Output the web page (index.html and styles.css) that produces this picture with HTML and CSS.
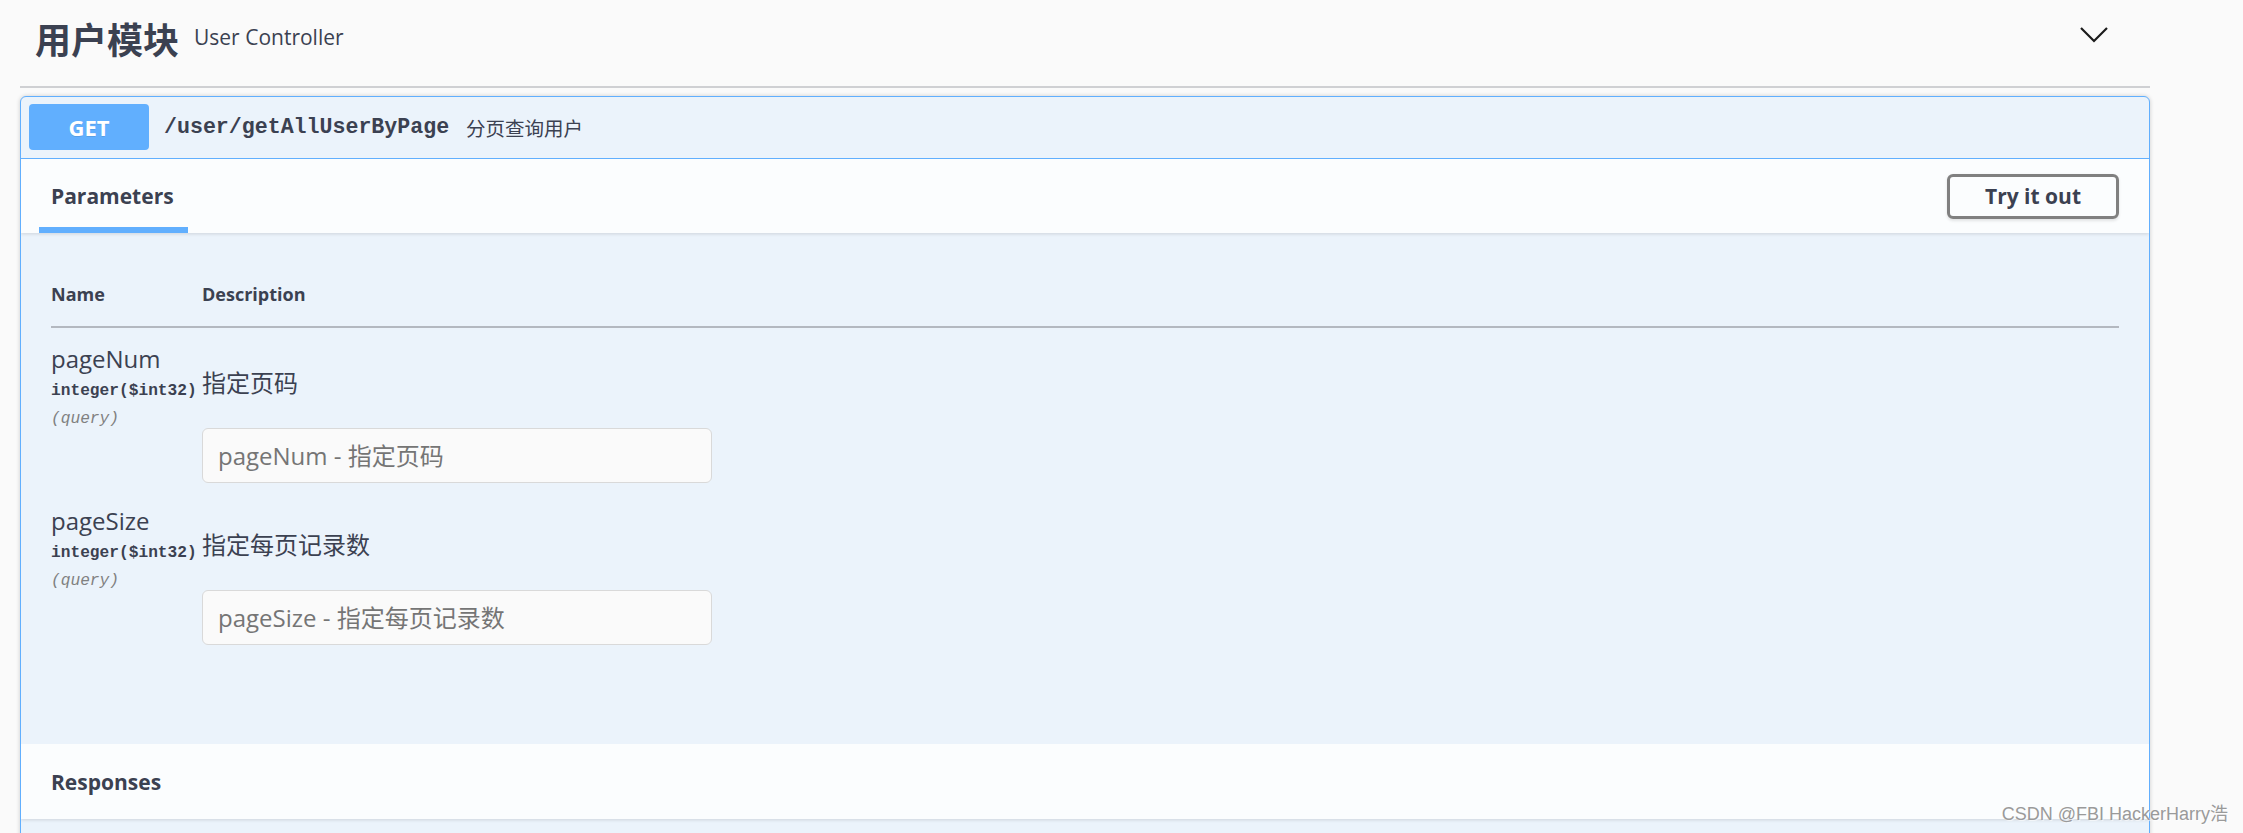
FILE: index.html
```html
<!DOCTYPE html>
<html lang="zh-CN">
<head>
<meta charset="utf-8">
<title>用户模块</title>
<link rel="stylesheet" href="styles.css">
</head>
<body>
<div class="wrapper">
  <div class="tag-header">
    <h3 class="tag-title">用户模块</h3>
    <span class="tag-desc">User Controller</span>
    <span class="spacer"></span>
    <svg class="chevron" width="30" height="30" viewBox="0 0 30 30" aria-hidden="true">
      <polyline points="2,8 15,21 28,8" fill="none" stroke="#1b1b1b" stroke-width="2.2"/>
    </svg>
  </div>

  <div class="opblock">
    <div class="summary">
      <span class="method">GET</span>
      <span class="path">/user/getAllUserByPage</span>
      <span class="summary-desc">分页查询用户</span>
    </div>

    <div class="section-header">
      <div class="tab"><h4 class="tab-title">Parameters</h4></div>
      <button class="try-out" type="button">Try it out</button>
    </div>

    <div class="params">
      <table class="param-table">
        <thead>
          <tr><th class="col-name">Name</th><th class="col-desc">Description</th></tr>
        </thead>
        <tbody>
          <tr>
            <td class="col-name">
              <div class="p-name">pageNum</div>
              <div class="p-type">integer($int32)</div>
              <div class="p-in">(query)</div>
            </td>
            <td class="col-desc">
              <p class="p-desc">指定页码</p>
              <input class="p-input" type="text" placeholder="pageNum - 指定页码">
            </td>
          </tr>
          <tr>
            <td class="col-name">
              <div class="p-name">pageSize</div>
              <div class="p-type">integer($int32)</div>
              <div class="p-in">(query)</div>
            </td>
            <td class="col-desc">
              <p class="p-desc">指定每页记录数</p>
              <input class="p-input" type="text" placeholder="pageSize - 指定每页记录数">
            </td>
          </tr>
        </tbody>
      </table>
    </div>

    <div class="section-header responses">
      <h4 class="tab-title plain">Responses</h4>
    </div>
    <div class="responses-body"></div>
  </div>
</div>
<div class="watermark">CSDN @FBI HackerHarry浩</div>
</body>
</html>
```

FILE: styles.css
```css
html, body {
  margin: 0;
  padding: 0;
  background: #fafafa;
  overflow: hidden;
  height: 833px;
}

body {
  font-family: "Open Sans", "Noto Sans CJK SC", sans-serif;
  color: #3b4151;
}

.wrapper {
  width: 2130px;
  margin-left: 20px;
}

/* Tag header */
.tag-header {
  display: flex;
  align-items: center;
  height: 76px;
  padding: 0 41px 10px 15px;
  border-bottom: 2px solid #cfd0d3;
  margin-bottom: 8px;
}

.tag-title {
  margin: 0;
  font-family: "Noto Sans CJK SC", sans-serif;
  font-size: 36px;
  font-weight: 700;
  line-height: 44px;
  color: #3b4151;
}

.tag-desc {
  padding: 0 15px;
  font-size: 21px;
  line-height: 30px;
  color: #3b4151;
  margin-top: -3px;
}

.spacer { flex: 1; }

.chevron {
  display: block;
  margin-top: -6px;
}

/* Operation block */
.opblock {
  border: 1px solid #61affe;
  border-radius: 6px;
  background: #ebf3fb;
  box-shadow: 0 0 4px rgba(0, 0, 0, 0.19);
  overflow: hidden;
}

.summary {
  display: flex;
  align-items: center;
  padding: 7px 7px 8px 8px;
  border-bottom: 1px solid #61affe;
}

.method {
  width: 120px;
  height: 46px;
  display: flex;
  align-items: center;
  justify-content: center;
  background: #61affe;
  border-radius: 4px;
  color: #fff;
  font-size: 22px;
  font-weight: 700;
  text-shadow: 0 1px 0 rgba(0, 0, 0, 0.1);
}

.path {
  padding: 0 15px;
  font-family: "Liberation Mono", monospace;
  font-size: 21.6px;
  font-weight: 700;
  color: #3b4151;
}

.summary-desc {
  font-family: "Noto Sans CJK SC", sans-serif;
  font-size: 19.5px;
  color: #3b4151;
  margin-left: 2px;
}

/* Section headers */
.section-header {
  display: flex;
  align-items: center;
  justify-content: space-between;
  height: 74px;
  padding: 0 30px;
  background: rgba(255, 255, 255, 0.8);
  box-shadow: 0 1.5px 3px rgba(0, 0, 0, 0.1);
  position: relative;
}

.tab {
  position: relative;
  align-self: stretch;
  display: flex;
  align-items: center;
}

.tab::after {
  content: "";
  position: absolute;
  left: -12px;
  right: -14px;
  bottom: 0;
  height: 6px;
  background: #61affe;
}

.tab-title {
  margin: 0;
  font-size: 21px;
  font-weight: 700;
  line-height: 30px;
  color: #3b4151;
}

.try-out {
  width: 172px;
  height: 45px;
  border: 3px solid #808080;
  border-radius: 6px;
  background: transparent;
  font-family: "Open Sans", sans-serif;
  font-size: 21px;
  font-weight: 700;
  color: #3b4151;
  box-shadow: 0 1.5px 3px rgba(0, 0, 0, 0.1);
  padding: 0;
}

.responses {
  height: 75px;
}

/* Parameters */
.params {
  padding: 30px 30px 92px;
}

.param-table {
  width: 100%;
  border-collapse: collapse;
}

.param-table th {
  text-align: left;
  font-size: 18px;
  font-weight: 700;
  line-height: 27px;
  padding: 18px 0;
  border-bottom: 2px solid #b3b8c0;
  color: #3b4151;
}

.param-table .col-name {
  width: 151px;
}

.param-table td {
  vertical-align: top;
  padding: 16px 0 0;
}

.p-name {
  font-size: 24px;
  line-height: 30px;
  color: #3b4151;
}

.p-type {
  margin-top: 8px;
  font-family: "Liberation Mono", monospace;
  font-size: 16.2px;
  font-weight: 700;
  line-height: 18px;
  color: #3b4151;
  white-space: nowrap;
}

.p-in {
  margin-top: 10px;
  font-family: "Liberation Mono", monospace;
  font-size: 16.2px;
  font-style: italic;
  line-height: 18px;
  color: #808080;
}

.p-desc {
  margin: 24px 0 0;
  font-size: 24px;
  line-height: 30px;
  color: #3b4151;
}

.p-input {
  display: block;
  box-sizing: border-box;
  width: 510px;
  height: 55px;
  margin: 30px 0 7px;
  padding: 0 15px;
  border: 1px solid #d9d9d9;
  border-radius: 6px;
  background: #fafafa;
  font-family: "Open Sans", "Noto Sans CJK SC", sans-serif;
  font-size: 24px;
  color: #3b4151;
}

.p-input::placeholder {
  color: #757575;
}

.responses-body {
  height: 120px;
}

.watermark {
  position: absolute;
  right: 15px;
  bottom: 8px;
  font-family: "Liberation Sans", "Noto Sans CJK SC", sans-serif;
  font-size: 18px;
  color: #9a9a9a;
  text-shadow: 1px 1px 1px rgba(255, 255, 255, 0.7);
}
```
